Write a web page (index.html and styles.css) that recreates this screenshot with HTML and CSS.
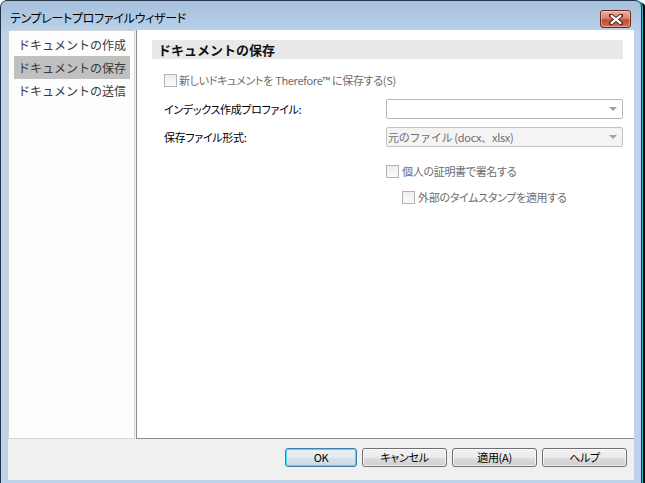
FILE: index.html
```html
<!doctype html>
<html lang="ja">
<head>
<meta charset="utf-8" />
<title>テンプレートプロファイルウィザード</title>
<link rel="stylesheet" href="styles.css">
</head>
<body>

<div class="window">
	<div class="titlebar">
		<span class="title">テンプレートプロファイルウィザード</span>
		<span class="close">
			<svg width="14" height="11" viewBox="0 0 14 11">
				<path d="M2 1.5 L12 9.5 M12 1.5 L2 9.5" stroke="#4a1a12" stroke-width="4" stroke-linecap="round"/>
				<path d="M2.5 1.8 L11.5 9.2 M11.5 1.8 L2.5 9.2" stroke="#fff" stroke-width="2.2" stroke-linecap="round"/>
			</svg>
		</span>
	</div>

	<div class="client">
		<div class="main">
			<ul class="nav">
				<li>ドキュメントの作成</li>
				<li class="selected">ドキュメントの保存</li>
				<li>ドキュメントの送信</li>
			</ul>

			<section class="panel">
				<h2 class="heading">ドキュメントの保存</h2>

				<div class="form">
					<label class="check disabled first">
						<span class="box"></span>新しいドキュメントを Therefore™ に保存する(S)
					</label>

					<div class="field">
						<span class="label">インデックス作成プロファイル:</span>
						<div class="select"><span class="value"></span><span class="arrow"></span></div>
					</div>

					<div class="field second">
						<span class="label">保存ファイル形式:</span>
						<div class="select disabled"><span class="value">元のファイル (docx、xlsx)</span><span class="arrow"></span></div>
					</div>

					<label class="check disabled sign">
						<span class="box"></span>個人の証明書で署名する
					</label>

					<label class="check disabled stamp">
						<span class="box"></span>外部のタイムスタンプを適用する
					</label>
				</div>
			</section>
		</div>

		<div class="footer">
			<button class="btn default ok">OK</button>
			<button class="btn">キャンセル</button>
			<button class="btn">適用(A)</button>
			<button class="btn">ヘルプ</button>
		</div>
	</div>
</div>

</body>
</html>
```

FILE: styles.css
```css
:root {
	--frame: #bcd3ea;
	--face:  #f0f0f0;
	--muted: #6d6d6d;
	font-family: "Noto Sans CJK JP", "Noto Sans", sans-serif;
	font-size: 12px;
}

body, html {
	margin: 0;
	padding: 0;
	background: #fff;
}

ul, h2 {
	margin: 0;
	padding: 0;
}


/* Window frame */

.window {
	height: 479px;
	width: 626px;
	border: 1px solid #233547;
	border-radius: 7px 7px 0 0;
	background: linear-gradient( #a6c0dc 0, #b9d1e9 30px, var(--frame) 30px );
	box-shadow: 1px 0 0 #2fb8d4, 4px 2px 0 #000;
	display: flex;
	flex-direction: column;
	padding: 0 7px 6px 7px;
}

.titlebar {
	height: 29px;
	display: flex;
	align-items: flex-start;
}

.title {
	margin: 8px 0 0 2px;
	font-size: 12px;
	line-height: 17px;
	letter-spacing: -0.3px;
	color: #000;
	font-feature-settings: "palt";
	flex: 1;
}

.close {
	width: 29px;
	height: 16px;
	margin: 9px 3px 0 0;
	border: 1px solid #6b2a1f;
	border-radius: 3px;
	background: linear-gradient( #eab0a2 0%, #d98571 45%, #c54a33 55%, #d4704f 100% );
	box-shadow: inset 0 0 0 1px rgba( 255, 255, 255, 0.35 );
	display: flex;
	align-items: center;
	justify-content: center;
}


/* Client area */

.client {
	flex: 1;
	background: var(--face);
	display: flex;
	flex-direction: column;
}

.main {
	height: 409px;
	display: flex;
	gap: 1px;
}

.nav {
	width: 125px;
	list-style: none;
	background: #fdfdfd;
	border: 1px solid #d5d5d5;
	padding: 2px 4px 0 5px;
}

.nav li {
	height: 23px;
	line-height: 23px;
	padding-left: 4px;
	color: #3a3a3a;
	white-space: nowrap;
}

.nav li.selected {
	background: #c0c0c0;
}

.panel {
	flex: 1;
	background: #fff;
	border-left: 1px solid #8c8c8c;
	border-bottom: 1px solid #8c8c8c;
	padding: 10px 11px 0 15px;
}

.heading {
	height: 19px;
	line-height: 19px;
	background: #e9e9e9;
	padding-left: 6px;
	font-size: 13px;
	font-weight: bold;
	color: #111;
}


/* Form */

.form {
	padding-left: 12px;
	display: flex;
	flex-direction: column;
	font-size: 11px;
	letter-spacing: -0.3px;
	font-feature-settings: "palt";
}

.check {
	display: flex;
	align-items: center;
	height: 13px;
	line-height: 13px;
	gap: 2px;
	white-space: nowrap;
}

.check.disabled {
	color: var(--muted);
}

.check .box {
	width: 11px;
	height: 11px;
	border: 1px solid #b3b3b3;
	background: linear-gradient( #eeeeee, #fbfbfb );
	flex: none;
}

.check.first {
	margin-top: 15px;
}

.check.sign {
	margin: 18px 0 0 222px;
	gap: 3px;
}

.check.stamp {
	margin: 13px 0 0 238px;
	gap: 3px;
}

.field {
	display: flex;
	align-items: center;
	margin-top: 12px;
	height: 20px;
}

.field.second {
	margin-top: 8px;
}

.field .label {
	width: 222px;
	color: #000;
}

.select {
	width: 234px;
	height: 18px;
	border: 1px solid #b7b7b7;
	border-radius: 2px;
	background: #fff;
	display: flex;
	align-items: center;
	padding-left: 1px;
	font-feature-settings: normal;
}

.select.disabled {
	background: #f4f4f4;
	border-color: #c3c3c3;
	color: var(--muted);
}

.select .value {
	flex: 1;
	white-space: nowrap;
}

.select .arrow {
	width: 0;
	height: 0;
	border-left: 4px solid transparent;
	border-right: 4px solid transparent;
	border-top: 4px solid #a2a2a2;
	margin-right: 5px;
}


/* Buttons */

.footer {
	flex: 1;
	display: flex;
	justify-content: flex-end;
	align-items: flex-start;
	gap: 5px;
	padding: 9px 7px 0 0;
}

.btn {
	width: 85px;
	height: 19px;
	padding: 0;
	font: inherit;
	font-size: 11px;
	letter-spacing: -0.3px;
	font-feature-settings: "palt";
	line-height: 15px;
	color: #000;
	border: 1px solid #707070;
	border-radius: 3px;
	background: linear-gradient( #f2f2f2 0%, #ebebeb 50%, #dddddd 51%, #cfcfcf 100% );
	box-shadow: inset 0 0 0 1px rgba( 255, 255, 255, 0.7 );
}

.btn.ok {
	width: 72px;
}

.btn.default {
	border-color: #3c7fb1;
	background: linear-gradient( #eaf2f7 0%, #e3ebf1 50%, #d7e1e8 51%, #cfd9e1 100% );
	box-shadow: inset 0 0 0 1px #48d8fb;
}
```
